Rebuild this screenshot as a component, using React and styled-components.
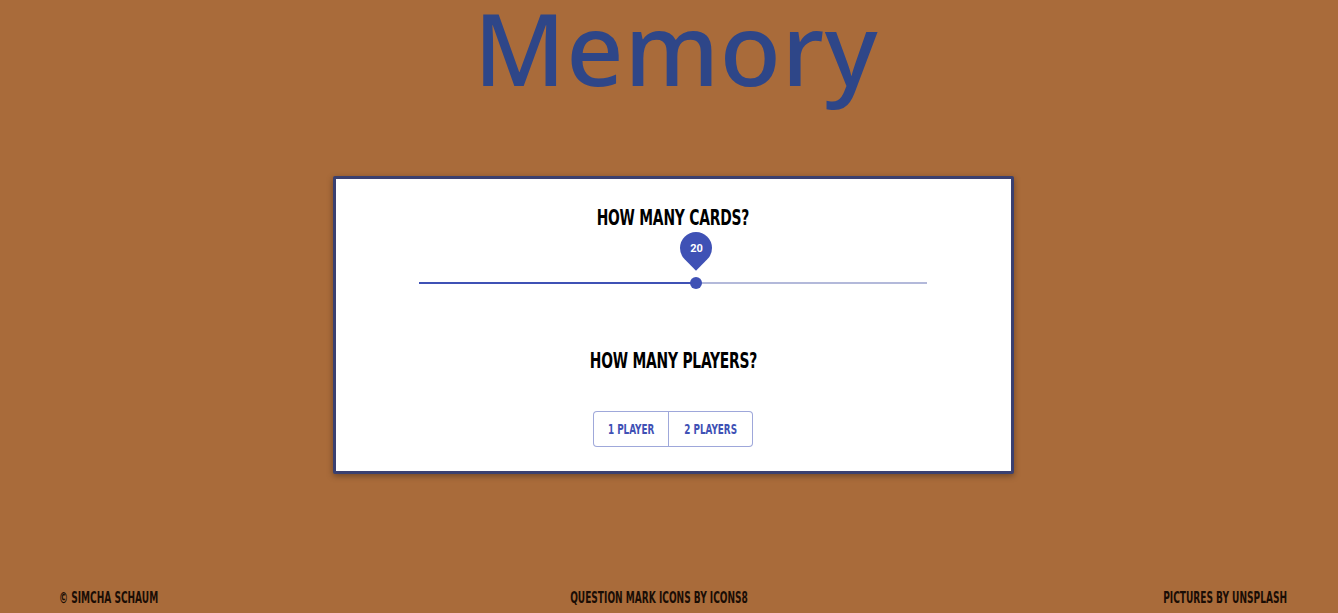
import React from "react";
import styled, { createGlobalStyle } from "styled-components";

const Global = createGlobalStyle`
  html, body { margin: 0; padding: 0; height: 100%; }
  body { background: #a96b3a; font-family: "DejaVu Sans Condensed", "Liberation Sans Narrow", "Roboto", sans-serif; }
  #root { height: 100%; }
`;

const Page = styled.div`
  height: 613px;
  display: flex;
  flex-direction: column;
  align-items: center;
  box-sizing: border-box;
`;

const Title = styled.h1`
  margin: 0;
  font-family: "Noto Sans", "Open Sans", sans-serif;
  font-weight: 500;
  font-size: 100px;
  line-height: 94px;
  color: #2e4688;
  letter-spacing: 0.7px;
  margin-left: 14px;
`;

const Card = styled.div`
  margin-top: 82px;
  margin-left: 8px;
  width: 681px;
  height: 298px;
  box-sizing: border-box;
  background: #fff;
  border: 3px solid #3a4070;
  border-radius: 2px;
  box-shadow: 0 2px 6px rgba(0, 0, 0, 0.35);
  display: flex;
  flex-direction: column;
  align-items: center;
  padding-top: 27px;
`;

const Heading = styled.h2`
  margin: 0;
  font-size: 22px;
  line-height: 24px;
  font-weight: 700;
  color: #000;
  text-transform: uppercase;
  letter-spacing: -0.3px;
  transform: scaleX(0.7);
  white-space: nowrap;
`;

const SliderWrap = styled.div`
  position: relative;
  width: 508px;
  height: 30px;
  margin-top: 38px;
`;

const Track = styled.div`
  position: absolute;
  left: 0;
  right: 0;
  top: 14px;
  height: 2px;
  background: #b3b9da;
`;

const Fill = styled.div`
  position: absolute;
  left: 0;
  top: 14px;
  height: 2px;
  background: #3f51b5;
`;

const Thumb = styled.div`
  position: absolute;
  top: 9px;
  width: 12px;
  height: 12px;
  margin-left: -6px;
  border-radius: 50%;
  background: #3f51b5;
`;

const Pin = styled.div`
  position: absolute;
  top: -36px;
  width: 32px;
  height: 32px;
  margin-left: -16px;
  border-radius: 50% 50% 50% 0;
  background: #3f51b5;
  transform: rotate(-45deg);
  display: flex;
  align-items: center;
  justify-content: center;
`;

const PinText = styled.span`
  transform: rotate(45deg);
  color: #fff;
  font-size: 11px;
  font-weight: 700;
  font-family: "Roboto", sans-serif;
`;

const PlayersHeading = styled(Heading)`
  margin-top: 51px;
`;

const Group = styled.div`
  margin-top: 38px;
  display: flex;
`;

const Btn = styled.button`
  height: 36px;
  padding: 0;
  background: #fff;
  border: 1px solid rgba(63, 81, 181, 0.5);
  color: #3f51b5;
  font-family: inherit;
  font-weight: 700;
  font-size: 14px;
  text-transform: uppercase;
  cursor: pointer;
  &:first-child { border-radius: 4px 0 0 4px; width: 76px; }
  &:last-child { border-radius: 0 4px 4px 0; border-left: none; width: 84px; }
`;

const BtnLabel = styled.span`
  display: inline-block;
  transform: scaleX(0.7);
  white-space: nowrap;
`;

const Footer = styled.footer`
  margin-top: auto;
  width: 100%;
  box-sizing: border-box;
  padding: 0 51px 6px 59px;
  display: flex;
  justify-content: space-between;
  align-items: center;
  height: 24px;
`;

const FootText = styled.span`
  font-size: 15px;
  font-weight: 700;
  color: #1a0d05;
  text-transform: uppercase;
  white-space: nowrap;
  width: 0;
  flex: 0 0 0;
  margin-right: ${(p) => (p.$align === "center" ? "28px" : "0")};
  transform: scaleX(0.67);
  transform-origin: ${(p) => (p.$align === "left" ? "left" : p.$align === "right" ? "right" : "center")} center;
  display: flex;
  justify-content: ${(p) => (p.$align === "left" ? "flex-start" : p.$align === "right" ? "flex-end" : "center")};
`;

export default function App() {
  const pct = 54.5;
  return (
    <>
      <Global />
      <Page>
        <Title>Memory</Title>
        <Card>
          <Heading>How many cards?</Heading>
          <SliderWrap>
            <Track />
            <Fill style={{ width: `${pct}%` }} />
            <Pin style={{ left: `${pct}%` }}>
              <PinText>20</PinText>
            </Pin>
            <Thumb style={{ left: `${pct}%` }} />
          </SliderWrap>
          <PlayersHeading>How many players?</PlayersHeading>
          <Group>
            <Btn><BtnLabel>1 Player</BtnLabel></Btn>
            <Btn><BtnLabel>2 Players</BtnLabel></Btn>
          </Group>
        </Card>
        <Footer>
          <FootText $align="left">© Simcha Schaum</FootText>
          <FootText $align="center">Question mark icons by Icons8</FootText>
          <FootText $align="right">Pictures by Unsplash</FootText>
        </Footer>
      </Page>
    </>
  );
}
